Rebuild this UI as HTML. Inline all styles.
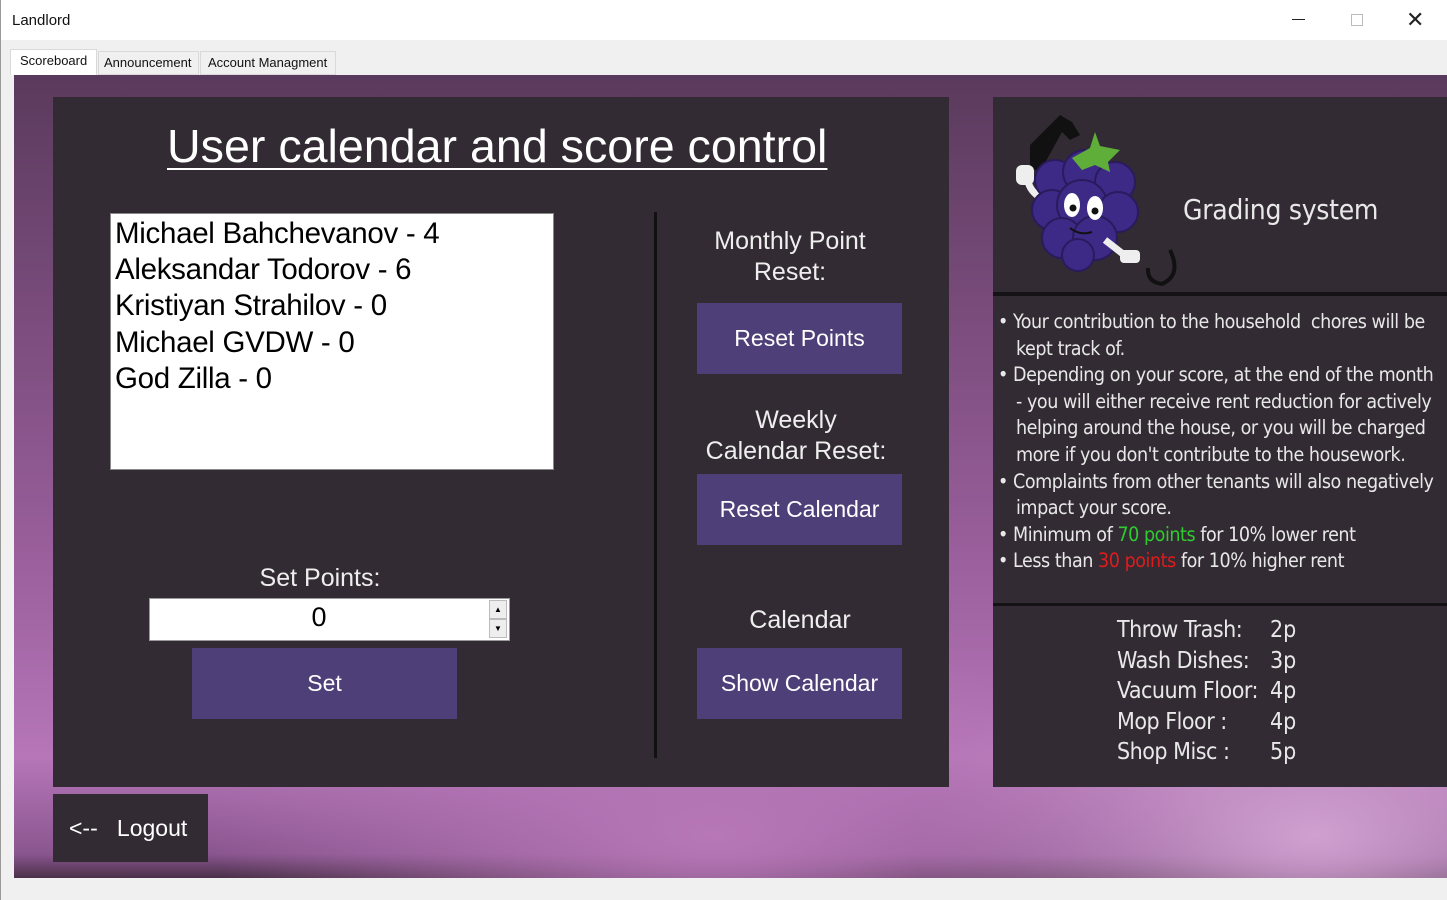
<!DOCTYPE html>
<html><head><style>
*{margin:0;padding:0;box-sizing:border-box}
body{width:1447px;height:900px;background:#f0f0f0;position:relative;overflow:hidden;font-family:"Liberation Sans",sans-serif}
.a{position:absolute}
.btn{position:absolute;background:#4f3f78;color:#fff;font-size:23px;display:flex;align-items:center;justify-content:center}
.lbl{position:absolute;color:#eee;font-size:25px;text-align:center;line-height:31px}
.g{font-family:"DejaVu Sans Condensed","Liberation Sans Narrow","Liberation Sans",sans-serif;color:#e8e8e8}
</style></head><body>
<div class="a" style="left:0;top:0;width:1447px;height:40px;background:#fff"></div>
<div class="a" style="left:12px;top:12px;font-size:15px;color:#111">Landlord</div>
<div class="a" style="left:1292px;top:19px;width:13px;height:1px;background:#222"></div>
<div class="a" style="left:1351px;top:14px;width:12px;height:12px;border:1px solid #bbb"></div>
<div class="a" style="left:1406px;top:7px;font-size:22px;color:#222;font-weight:300">✕</div>
<div class="a" style="left:0;top:0;width:1px;height:900px;background:#999"></div>
<div class="a" style="left:10px;top:49px;width:87px;height:26px;background:#fff;border:1px solid #d9d9d9;border-bottom:none;font-size:13px;padding:3px 0 0 9px;color:#111">Scoreboard</div>
<div class="a" style="left:98px;top:51px;width:101px;height:24px;background:#f0f0f0;border:1px solid #d9d9d9;font-size:13px;padding:3px 0 0 5px;color:#111">Announcement</div>
<div class="a" style="left:200px;top:51px;width:136px;height:24px;background:#f0f0f0;border:1px solid #d9d9d9;font-size:13px;padding:3px 0 0 7px;color:#111">Account Managment</div>
<div class="a" style="left:14px;top:75px;width:1433px;height:803px;background:
radial-gradient(ellipse 500px 200px at 700px 760px,#b878b8,transparent),
radial-gradient(ellipse 400px 200px at 1300px 760px,#d0a0d0,transparent),
linear-gradient(180deg,#5a3a5c 0%,#7a4c7c 30%,#9a5f9c 60%,#b676b8 85%,#8a5690 97%,#4a3048 100%)"></div>
<div class="a" style="left:53px;top:97px;width:896px;height:690px;background:#332b33"></div>
<div class="a" style="left:167px;top:119px;font-size:46.6px;color:#fff;text-decoration:underline;text-decoration-thickness:2px;text-underline-offset:6px">User calendar and score control</div>
<div class="a" style="left:110px;top:213px;width:444px;height:257px;background:#fff;border:1px solid #888;font-size:29.5px;letter-spacing:-0.3px;color:#000;line-height:36.2px;padding:2px 0 0 4px">Michael Bahchevanov - 4<br>Aleksandar Todorov - 6<br>Kristiyan Strahilov - 0<br>Michael GVDW - 0<br>God Zilla - 0</div>
<div class="lbl" style="left:150px;top:563px;width:340px">Set Points:</div>
<div class="a" style="left:149px;top:598px;width:361px;height:43px;background:#fff;border:1px solid #999"></div>
<div class="a" style="left:149px;top:602px;width:340px;text-align:center;font-size:27px;color:#000">0</div>
<div class="a" style="left:489px;top:600px;width:18px;height:19px;border:1px solid #bbb;background:#eee;font-size:8px;text-align:center;line-height:17px">▲</div>
<div class="a" style="left:489px;top:619px;width:18px;height:19px;border:1px solid #bbb;background:#eee;font-size:8px;text-align:center;line-height:17px">▼</div>
<div class="btn" style="left:192px;top:648px;width:265px;height:71px">Set</div>
<div class="a" style="left:654px;top:212px;width:3px;height:546px;background:#111"></div>
<div class="lbl" style="left:680px;top:226px;width:220px">Monthly Point<br>Reset:</div>
<div class="btn" style="left:697px;top:303px;width:205px;height:71px">Reset Points</div>
<div class="lbl" style="left:686px;top:405px;width:220px">Weekly<br>Calendar Reset:</div>
<div class="btn" style="left:697px;top:474px;width:205px;height:71px">Reset Calendar</div>
<div class="lbl" style="left:690px;top:605px;width:220px">Calendar</div>
<div class="btn" style="left:697px;top:648px;width:205px;height:71px">Show Calendar</div>
<div class="a" style="left:53px;top:794px;width:155px;height:68px;background:#332b33;color:#fff;font-size:23px;display:flex;align-items:center;padding-left:16px">&lt;--&nbsp;&nbsp;&nbsp;Logout</div>
<div class="a" style="left:993px;top:97px;width:454px;height:690px;background:#332b33"></div>
<div class="a" style="left:993px;top:292px;width:454px;height:4px;background:#151215"></div>
<div class="a" style="left:993px;top:603px;width:454px;height:3px;background:#151215"></div>
<svg class="a" style="left:1010px;top:110px" width="180" height="180" viewBox="0 0 180 180">
<path d="M20 35 L50 5 L62 12 L70 25 L60 30 L52 22 L30 62 L20 58Z" fill="#111"/>
<rect x="6" y="55" width="18" height="20" rx="6" fill="#eee"/>
<path d="M18 72 Q22 85 36 90" stroke="#eee" stroke-width="7" fill="none"/>
<g fill="#3d2a86" stroke="#2a1a5e" stroke-width="2">
<circle cx="45" cy="70" r="20"/><circle cx="75" cy="62" r="22"/><circle cx="105" cy="72" r="20"/>
<circle cx="42" cy="100" r="20"/><circle cx="72" cy="95" r="25"/><circle cx="108" cy="102" r="20"/>
<circle cx="52" cy="128" r="20"/><circle cx="85" cy="128" r="22"/><circle cx="68" cy="145" r="16"/>
</g>
<path d="M62 48 L80 38 L85 22 L90 36 L110 40 L98 52 L100 62 L85 55 L72 60Z" fill="#5fae3a"/>
<ellipse cx="62" cy="95" rx="8" ry="12" fill="#fff"/><ellipse cx="85" cy="98" rx="8" ry="12" fill="#fff"/>
<circle cx="63" cy="98" r="3.5" fill="#111"/><circle cx="85" cy="101" r="3.5" fill="#111"/>
<path d="M60 118 Q70 126 82 122" stroke="#111" stroke-width="2" fill="none"/>
<path d="M95 130 Q108 140 118 148" stroke="#eee" stroke-width="7" fill="none"/>
<rect x="110" y="140" width="20" height="13" rx="4" fill="#eee"/>
<path d="M160 140 Q172 165 152 174 Q137 172 138 158" stroke="#111" stroke-width="4" fill="none"/>
</svg>
<div class="a g" style="left:1183px;top:193px;font-size:28px;letter-spacing:-0.3px">Grading system</div>
<div class="a g" style="left:998px;top:309px;width:449px;font-size:19.5px;line-height:26.6px;letter-spacing:-0.45px">
<div>• Your contribution to the household&nbsp; chores will be</div>
<div style="padding-left:18px">kept track of.</div>
<div>• Depending on your score, at the end of the month</div>
<div style="padding-left:18px">- you will either receive rent reduction for actively helping around the house, or you will be charged more if you don't contribute to the housework.</div>
<div>• Complaints from other tenants will also negatively</div>
<div style="padding-left:18px">impact your score.</div>
<div>• Minimum of <span style="color:#2ecc2e">70 points</span> for 10% lower rent</div>
<div>• Less than <span style="color:#e01b1b">30 points</span> for 10% higher rent</div>
</div>
<div class="a g" style="left:1117px;top:615px;font-size:23px;line-height:30.5px;letter-spacing:-0.5px">Throw Trash:<br>Wash Dishes:<br>Vacuum Floor:<br>Mop Floor :<br>Shop Misc :</div>
<div class="a g" style="left:1270px;top:615px;font-size:23px;line-height:30.5px">2p<br>3p<br>4p<br>4p<br>5p</div>
</body></html>
